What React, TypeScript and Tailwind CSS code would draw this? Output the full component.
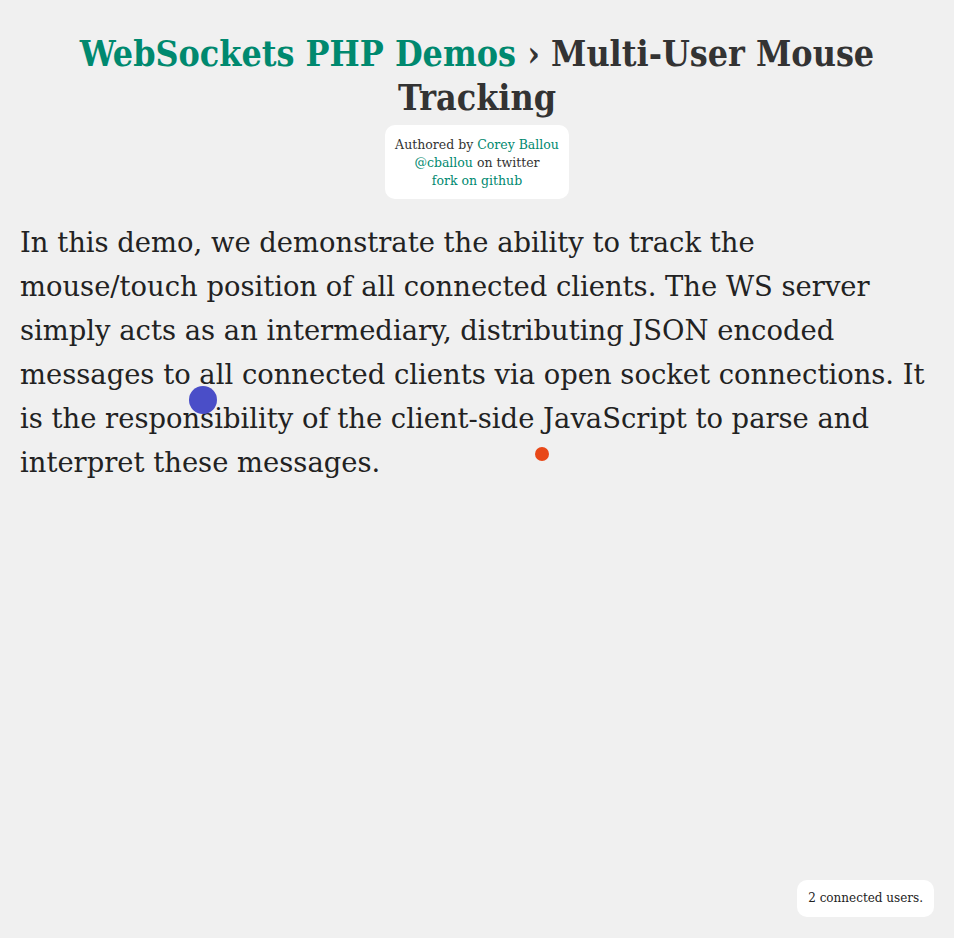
export default function App() {
  return (
    <div className="relative min-h-[938px] bg-[#f0f0f0] px-5 pt-[32px] text-[#222] [font-family:'DejaVu_Serif',serif]">
      <h1 className="text-center text-[35.5px] font-bold leading-[44px] text-[#333] [font-family:'DejaVu_Serif_Condensed','DejaVu_Serif',serif]">
        <a className="text-[#00896f]">WebSockets PHP Demos</a> <span>› Multi-User Mouse</span>
        <br />
        <span>Tracking</span>
      </h1>
      <div className="mt-[5px] flex justify-center">
        <div className="rounded-[10px] bg-white px-[10px] pb-[9px] pt-[11px] text-center text-[12.5px] leading-[18px] text-[#333]">
          <div>
            Authored by <a className="text-[#00896f]">Corey Ballou</a>
          </div>
          <div>
            <a className="text-[#00896f]">@cballou</a> on twitter
          </div>
          <div>
            <a className="text-[#00896f]">fork on github</a>
          </div>
        </div>
      </div>
      <p className="mt-[22px] text-[27.4px] leading-[44px] text-[#222]">
        In this demo, we demonstrate the ability to track the mouse/touch position of all connected clients. The WS
        server simply acts as an intermediary, distributing JSON encoded messages to all connected clients via open
        socket connections. It is the responsibility of the client-side JavaScript to parse and interpret these
        messages.
      </p>
      <div className="absolute left-[189px] top-[386px] h-[28px] w-[28px] rounded-full bg-[#4a4ec8]" />
      <div className="absolute left-[535px] top-[447px] h-[14px] w-[14px] rounded-full bg-[#e84818]" />
      <div className="absolute bottom-[21px] right-5 rounded-[10px] bg-white px-[11px] py-[10px] text-[12px] leading-[17px] text-[#222]">
        2 connected users.
      </div>
    </div>
  )
}
